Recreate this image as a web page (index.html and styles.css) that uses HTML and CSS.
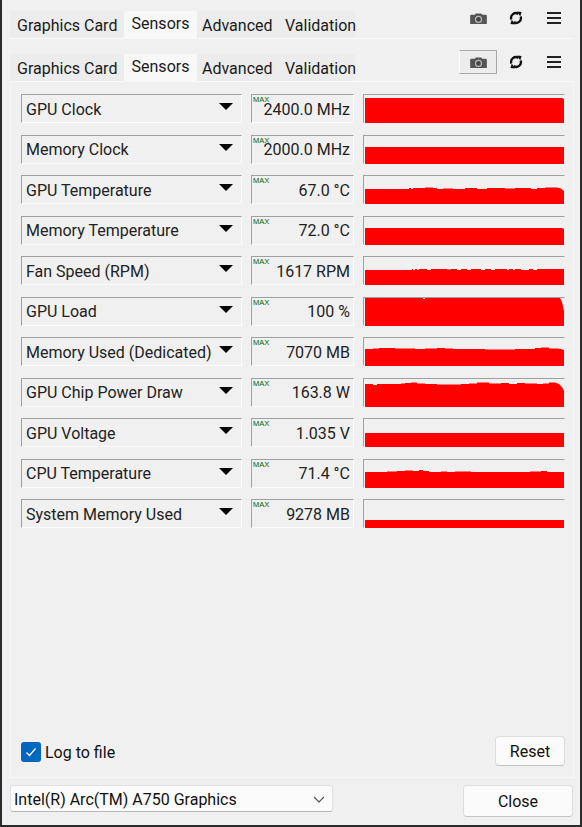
FILE: index.html
```html
<!DOCTYPE html>
<html lang="en">
<head>
<meta charset="utf-8">
<title>GPU-Z Sensors</title>
<link rel="stylesheet" href="styles.css">
</head>
<body>
<div class="window">
  <div class="strip strip-ghost">
    <div class="tabs">
      <span class="tab">Graphics Card</span><span class="tab active">Sensors</span><span class="tab">Advanced</span><span class="tab">Validation</span>
    </div>
    <div class="tools">
      <span class="tool"><svg class="icon" viewBox="0 0 18 14"><use href="#cam"/></svg></span>
      <span class="tool"><svg class="icon" viewBox="0 0 14 14"><use href="#ref"/></svg></span>
      <span class="tool"><svg class="icon" viewBox="0 0 14 14"><use href="#menu"/></svg></span>
    </div>
  </div>
  <div class="strip strip-main">
    <div class="tabs">
      <span class="tab">Graphics Card</span><span class="tab active">Sensors</span><span class="tab">Advanced</span><span class="tab">Validation</span>
    </div>
    <div class="tools">
      <span class="tool tool-hover"><svg class="icon" viewBox="0 0 18 14"><use href="#cam"/></svg></span>
      <span class="tool"><svg class="icon" viewBox="0 0 14 14"><use href="#ref"/></svg></span>
      <span class="tool"><svg class="icon" viewBox="0 0 14 14"><use href="#menu"/></svg></span>
    </div>
  </div>

  <svg class="defs" width="0" height="0">
    <defs>
      <g id="cam"><path fill="#555" d="M1 3h4l1-1.500h6l1 1.500h4q1 0 1 1v8q0 1-1 1H1q-1 0-1-1V4q0-1 1-1z"/><circle cx="9" cy="8" r="3.200" fill="#444" stroke="#bbb" stroke-width="1.300"/></g>
      <g id="ref" fill="none" stroke="#111" stroke-width="2.300"><path d="M2.400 8.500A4.700 4.700 0 0 1 9.500 3"/><path d="M11.600 5.500A4.700 4.700 0 0 1 4.500 11"/><path fill="#111" stroke="none" d="M8.200 0.600l4.400 0.400-1.400 4.400zM5.800 13.400l-4.400-0.400 1.400-4.400z"/></g>
      <g id="menu" fill="#222"><rect x="0" y="1" width="14" height="2"/><rect x="0" y="6" width="14" height="2"/><rect x="0" y="11" width="14" height="2"/></g>
    </defs>
  </svg>

  <div class="panel">
    <div class="rows">
      <div class="row"><div class="sel">GPU Clock<i class="arrow"></i></div><div class="val"><b>MAX</b>2400.0 MHz</div><div class="graph"><svg viewBox="0 0 199 28" preserveAspectRatio="none"><path d="M0 3H197L199 4V28H0z"/></svg></div></div>
      <div class="row"><div class="sel">Memory Clock<i class="arrow"></i></div><div class="val"><b>MAX</b>2000.0 MHz</div><div class="graph"><svg viewBox="0 0 199 28" preserveAspectRatio="none"><path d="M0 11H199V28H0z"/></svg></div></div>
      <div class="row"><div class="sel">GPU Temperature<i class="arrow"></i></div><div class="val"><b>MAX</b>67.0 °C</div><div class="graph"><svg viewBox="0 0 199 28" preserveAspectRatio="none"><path d="M0 13H44V12H46V13H48V12H60V11.500H68V12H72V13H78V12.500H88V13H100V12H112V13H122V12H140V12.500H150V12H166V13H172V12H180V11.500H192L196 12.500L199 15V28H0z"/></svg></div></div>
      <div class="row"><div class="sel">Memory Temperature<i class="arrow"></i></div><div class="val"><b>MAX</b>72.0 °C</div><div class="graph"><svg viewBox="0 0 199 28" preserveAspectRatio="none"><path d="M0 11H197L199 12V28H0z"/></svg></div></div>
      <div class="row"><div class="sel">Fan Speed (RPM)<i class="arrow"></i></div><div class="val"><b>MAX</b>1617 RPM</div><div class="graph"><svg viewBox="0 0 199 28" preserveAspectRatio="none"><path d="M0 13H47V12H48V13H50V12H52V13H54V12H62V13H66V12H82V12.500H86V12H92V13H96V12H102V13H106V12H116V13H120V12H126V13H130V12H142V13H144V12H148V13H150V12H156V13H164V12H168V13H172V12H199V28H0z"/></svg></div></div>
      <div class="row"><div class="sel">GPU Load<i class="arrow"></i></div><div class="val"><b>MAX</b>100 %</div><div class="graph"><svg viewBox="0 0 199 28" preserveAspectRatio="none"><path d="M0 0H58V1H60V0H195L197 4L199 13V28H0z"/></svg></div></div>
      <div class="row"><div class="sel">Memory Used (Dedicated)<i class="arrow"></i></div><div class="val"><b>MAX</b>7070 MB</div><div class="graph"><svg viewBox="0 0 199 28" preserveAspectRatio="none"><path d="M0 11H8V10.500H14V10H30V10.500H50V11H60V10.500H72V10H80V10.500H88V11H120V11.500H150V11H170V10H176V9.500H184V10.500H192L196 11L199 12V28H0z"/></svg></div></div>
      <div class="row"><div class="sel">GPU Chip Power Draw<i class="arrow"></i></div><div class="val"><b>MAX</b>163.8 W</div><div class="graph"><svg viewBox="0 0 199 28" preserveAspectRatio="none"><path d="M0 5H8V6H12V5H36V4.500H40V4H46V3.500H52V4.500H60V5H72V5.500H96V5H104V4.500H112V3.500H118V3.500H124V4.500H136V4H144V5H152V4H160V4.500H172V5H178V4.500H184V3.500H190L194 5L197 8L199 12V28H0z"/></svg></div></div>
      <div class="row"><div class="sel">GPU Voltage<i class="arrow"></i></div><div class="val"><b>MAX</b>1.035 V</div><div class="graph"><svg viewBox="0 0 199 28" preserveAspectRatio="none"><path d="M0 14H199V28H0z"/></svg></div></div>
      <div class="row"><div class="sel">CPU Temperature<i class="arrow"></i></div><div class="val"><b>MAX</b>71.4 °C</div><div class="graph"><svg viewBox="0 0 199 28" preserveAspectRatio="none"><path d="M0 12H22V11.500H32V11H40V10.500H48V11H54V10H58V11H64V12H76V11.500H82V12H90V11.500H106V12H165V11.500H176V11H182V12H199V28H0z"/></svg></div></div>
      <div class="row"><div class="sel">System Memory Used<i class="arrow"></i></div><div class="val"><b>MAX</b>9278 MB</div><div class="graph"><svg viewBox="0 0 199 28" preserveAspectRatio="none"><path d="M0 20H199V28H0z"/></svg></div></div>
    </div>
    <div class="panel-foot">
      <label class="check"><span class="box"><svg viewBox="0 0 20 20"><path d="M5.500 10.500l3 3 6-7" fill="none" stroke="#fff" stroke-width="1.200"/></svg></span><span class="check-label">Log to file</span></label>
      <button class="btn btn-reset" type="button">Reset</button>
    </div>
  </div>

  <div class="foot">
    <div class="combo">Intel(R) Arc(TM) A750 Graphics<svg class="chev" viewBox="0 0 12 7"><path d="M1 1l5 5 5-5" fill="none" stroke="#555" stroke-width="1.200"/></svg></div>
    <button class="btn btn-close" type="button">Close</button>
  </div>
</div>
</body>
</html>
```

FILE: styles.css
```css
* { box-sizing: border-box; }
html, body { margin: 0; padding: 0; }
body { width: 582px; height: 827px; overflow: hidden; background: #f0f0f0; font-family: "Roboto", "Liberation Sans", sans-serif; font-size: 16px; color: #1a1a1a; }

.window { width: 582px; height: 827px; border-left: 2px solid #2b2b2b; border-right: 2px solid #2b2b2b; border-bottom: 2px solid #2b2b2b; display: flex; flex-direction: column; background: #f0f0f0; }

.strip { display: flex; justify-content: space-between; align-items: flex-start; margin-left: 8px; margin-right: 6px; border-bottom: 1px solid #fafafa; height: 28px; }
.strip-ghost { margin-top: 11px; }
.strip-main { margin-top: 15px; }

.tabs { display: flex; height: 27px; }
.tab { display: flex; align-items: center; height: 27px; background: #ececec; white-space: nowrap; padding-top: 1px; }
.tab:first-child { width: 114px; padding-left: 7px; }
.tab.active { background: #f8f8f8; height: 28px; padding: 0 0 3px; width: 73px; justify-content: center; }
.tab:nth-child(3) { width: 84px; padding-left: 5px; }
.tab:nth-child(4) { width: 74px; padding-left: 4px; }

.tools { display: flex; align-items: center; margin-right: 1px; margin-top: -4px; }
.tool { display: flex; align-items: center; justify-content: center; width: 38px; height: 24px; }
.tool-hover { border: 1px solid #fafafa; border-right-color: #a8a8a8; border-bottom-color: #a8a8a8; border-top-color: #a8a8a8; background: #ececec; }
.strip-ghost .tools { margin-top: -5px; }
.icon { height: 14px; width: 14px; }
.tool:first-child .icon { width: 17px; height: 13px; }

.defs { position: absolute; }

.panel { flex: 1; margin-left: 8px; margin-right: 6px; border-right: 1px solid #f7f7f7; border-left: 1px solid #f7f7f7; border-bottom: 1px solid #f9f9f9; padding: 12.400px 8px 11px 10px; display: flex; flex-direction: column; justify-content: space-between; }

.rows { display: flex; flex-direction: column; gap: 11.500px; }
.row { display: grid; grid-template-columns: 221px 103px 202px; column-gap: 9px; height: 29px; }

.sel, .val, .graph { border: 1px solid; border-color: #a0a0a0 #fcfcfc #fcfcfc #a0a0a0; height: 29px; }
.sel { display: flex; align-items: center; justify-content: space-between; padding: 1px 8px 0 4px; white-space: nowrap; color: #222; }
.arrow { width: 0; height: 0; border-left: 7px solid transparent; border-right: 7px solid transparent; border-top: 7px solid #000; margin-bottom: 5px; }
.val { position: relative; display: flex; align-items: center; justify-content: flex-end; padding: 1px 3px 0 0; color: #222; }
.val b { position: absolute; left: 1px; top: 1px; font-family: "Liberation Sans", sans-serif; font-weight: 400; font-size: 7.500px; line-height: 7px; color: #006400; }
.graph { padding: 0 0 0 1px; border-right-color: #f0f0f0; border-bottom-color: #f0f0f0; }
.graph svg { display: block; width: 199px; height: 28px; fill: #fe0000; }

.panel-foot { display: flex; justify-content: space-between; align-items: flex-start; }
.check { display: flex; align-items: center; gap: 4px; margin-top: 5px; color: #111; }
.check-label { padding-top: 2px; }
.box { width: 20px; height: 20px; background: #0067c0; border-radius: 3px; display: block; }
.box svg { display: block; width: 20px; height: 20px; }

.btn { font: inherit; color: #111; background: #fbfbfb; border: 1px solid #dcdcdc; border-bottom-color: #c4c4c4; border-radius: 4px; padding: 0; }
.btn-reset { width: 70px; height: 30px; }

.foot { display: flex; justify-content: space-between; align-items: flex-start; padding: 7px 7px 0 8px; height: 47px; }
.combo { width: 323px; height: 27px; background: #fbfbfb; border: 1px solid #e0e0e0; border-bottom-color: #b8b8b8; border-radius: 3px; display: flex; align-items: center; justify-content: space-between; padding: 1px 6px 0 3px; color: #111; }
.chev { width: 12px; height: 7px; margin-right: 1px; }
.btn-close { width: 110px; height: 32px; }
```
